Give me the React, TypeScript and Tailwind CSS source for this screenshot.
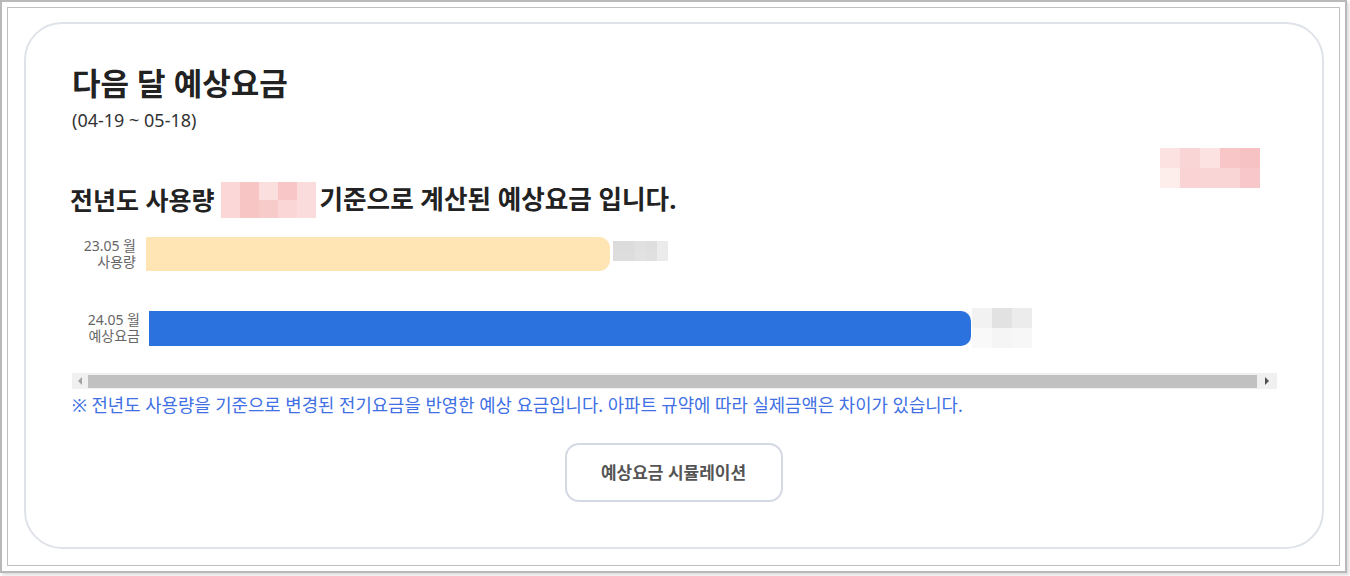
import React from "react";

const font = { fontFamily: '"Noto Sans", "Noto Sans CJK KR", sans-serif' };

function Mosaic({ cells, w, h, cols }: { cells: string[]; w: number; h: number; cols: number }) {
  return (
    <div className="grid shrink-0" style={{ gridTemplateColumns: `repeat(${cols}, ${w}px)`, gridAutoRows: `${h}px` }}>
      {cells.map((c, i) => (
        <div key={i} style={{ backgroundColor: c }} />
      ))}
    </div>
  );
}

const pinkCells = [
  "#fce3e2", "#fad5d5", "#fce2e0", "#f8c6c6", "#f7c2c3",
  "#fdeeec", "#fad4d5", "#fad5d5", "#fad5d5", "#f8c7c9",
];
const headPink = [
  "#fbd7d7", "#f8c5c5", "#fbdfdf", "#f8c6c6", "#fbdcdc",
  "#fbd7d7", "#f8c5c5", "#f8cbcb", "#fbd6d6", "#fbdcdc",
];
const grayRow1 = ["#dcdcdc", "#dcdcdc", "#e0e0e0", "#dedede", "#ebebeb", "#dddddd", "#dddddd", "#e2e2e2", "#e0e0e0", "#ebebeb"];
const grayRow2 = ["#f2f2f2", "#e2e2e2", "#ececec", "#f9f9f9", "#f5f5f5", "#f7f7f7"];

function BarLabel({ top, bottom, w }: { top: string; bottom: string; w: string }) {
  return (
    <div className={`${w} text-right text-[14px] leading-[16px] text-[#666] flex flex-col`}>
      <span className="block h-[16px]">{top}</span>
      <span className="block h-[16px]">{bottom}</span>
    </div>
  );
}

export default function App() {
  return (
    <div className="bg-white w-[1350px] h-[576px]" style={font}>
      <div className="w-[1347px] h-[573px] border-2 border-[#b9b9b9] p-[5px] shadow-[2px_2px_3px_rgba(0,0,0,0.15)]">
        <div className="h-full border border-[#c0c0c0] pl-[16px] pt-[14px]">
          <div className="w-[1300px] h-[527px] border-2 border-[#dfe3e9] rounded-[38px] pl-[46px] pr-[62px] pt-[40px]">
            <h2 className="text-[31px] font-bold leading-[38px] text-[#222]">다음 달 예상요금</h2>
            <p className="text-[18px] leading-[22px] text-[#333] mt-[7px]">(04-19 ~ 05-18)</p>

            <div className="flex justify-end mt-[17px]">
              <Mosaic cells={pinkCells} w={20} h={20} cols={5} />
            </div>

            <div className="flex items-center mt-[-6px] -ml-[2px] h-[36px]">
              <span className="text-[25px] font-bold text-[#222] leading-[36px]">전년도 사용량</span>
              <div className="ml-[6px] mr-[4px]">
                <Mosaic cells={headPink} w={19} h={18} cols={5} />
              </div>
              <span className="text-[25.6px] font-bold text-[#222] leading-[36px]">기준으로 계산된 예상요금 입니다.</span>
            </div>

            <div className="flex flex-col gap-[37px] mt-[19px] -ml-[8px]">
              <div className="flex items-center h-[34px]">
                <BarLabel top="23.05 월" bottom="사용량" w="w-[72px]" />
                <div className="ml-[10px] w-[464px] h-[34px] bg-[#ffe4b4] rounded-r-[11px]" />
                <div className="ml-[3px] self-start mt-[4px]">
                  <Mosaic cells={grayRow1} w={11} h={10} cols={5} />
                </div>
              </div>
              <div className="flex items-center h-[40px]">
                <BarLabel top="24.05 월" bottom="예상요금" w="w-[76px]" />
                <div className="ml-[9px] w-[822px] h-[35px] bg-[#2b72df] rounded-r-[10px]" />
                <div className="ml-[1px]">
                  <Mosaic cells={grayRow2} w={20} h={20} cols={3} />
                </div>
              </div>
            </div>

            <div className="mt-[25px] w-[1205px] h-[16px] bg-[#f0f0f0] flex items-center">
              <div className="w-[16px] flex justify-center">
                <div className="w-0 h-0 border-y-[4px] border-y-transparent border-r-[4px] border-r-[#a3a3a3]" />
              </div>
              <div className="flex-1 h-[13px] bg-[#c1c1c1]" />
              <div className="w-[20px] flex justify-center">
                <div className="w-0 h-0 border-y-[4px] border-y-transparent border-l-[4px] border-l-[#505050]" />
              </div>
            </div>

            <p className="mt-[4px] text-[17.8px] leading-[24px] text-[#4070e4]">
              ※ 전년도 사용량을 기준으로 변경된 전기요금을 반영한 예상 요금입니다. 아파트 규약에 따라 실제금액은 차이가 있습니다.
            </p>

            <div className="flex justify-center mt-[26px]">
              <button className="ml-[15px] w-[218px] h-[59px] border-2 border-[#d5d9e3] rounded-[14px] bg-white text-[17px] font-bold text-[#555]">
                예상요금 시뮬레이션
              </button>
            </div>
          </div>
        </div>
      </div>
    </div>
  );
}
